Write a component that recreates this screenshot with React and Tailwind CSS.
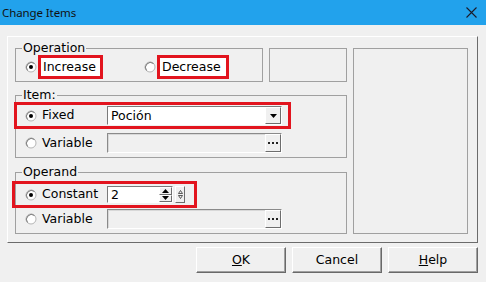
import React from 'react';

const Radio = ({ checked }) => (
  <svg width="12" height="12" viewBox="0 0 12 12" className="shrink-0">
    <circle cx="6" cy="6" r="5" fill="#fff" stroke="#b5b5b5" />
    <path d="M2.5 9.5 A5 5 0 0 1 9.5 2.5" fill="none" stroke="#7a7a7a" />
    {checked && <circle cx="6" cy="6" r="2" fill="#000" />}
  </svg>
);

const Dots = () => (
  <div className="flex h-full w-[16px] shrink-0 items-center justify-center gap-[2px] border border-t-white border-l-white border-r-[#6d6d6d] border-b-[#6d6d6d] bg-[#f0f0f0]">
    <span className="h-[2px] w-[2px] bg-[#222]" />
    <span className="h-[2px] w-[2px] bg-[#222]" />
    <span className="h-[2px] w-[2px] bg-[#222]" />
  </div>
);

const BrowseField = () => (
  <div className="flex h-[20px] w-[175px] justify-end border border-t-[#8a8a8a] border-l-[#8a8a8a] border-r-white border-b-white bg-[#f0f0f0] shadow-[inset_1px_1px_0_#d8d8d8]">
    <Dots />
  </div>
);

const Spin = () => (
  <div className="flex w-[13px] flex-col">
    <div className="flex h-1/2 items-center justify-center border border-t-white border-l-white border-r-[#6d6d6d] border-b-[#6d6d6d] bg-[#f0f0f0]">
      <svg width="7" height="4" viewBox="0 0 7 4"><path d="M3.5 0 L7 4 L0 4 Z" fill="#000" /></svg>
    </div>
    <div className="flex h-1/2 items-center justify-center border border-t-white border-l-white border-r-[#6d6d6d] border-b-[#6d6d6d] bg-[#f0f0f0]">
      <svg width="7" height="4" viewBox="0 0 7 4"><path d="M0 0 L7 0 L3.5 4 Z" fill="#000" /></svg>
    </div>
  </div>
);

const Button = ({ children }) => (
  <button className="flex h-[26px] w-[90px] items-center justify-center border border-t-white border-l-white border-r-[#696969] border-b-[#696969] bg-[#f0f0f0] text-[12.5px] shadow-[inset_-1px_-1px_0_#a0a0a0]">
    {children}
  </button>
);

export default function App() {
  return (
    <div className="h-[282px] w-[486px] bg-[#f0f0f0] font-['DejaVu_Sans',sans-serif] text-[12.5px] text-black">
      <div className="flex h-[25px] items-center justify-between bg-[#22a2ec] pl-[2px] pr-[9px]">
        <span className="font-['Noto_Sans',sans-serif] text-[11.5px] tracking-[-0.1px] text-[#111]">Change Items</span>
        <svg width="11" height="11" viewBox="0 0 11 11">
          <path d="M0.5 0.5 L10.5 10.5 M10.5 0.5 L0.5 10.5" stroke="#1b1b2a" strokeWidth="1.1" />
        </svg>
      </div>

      <div className="pl-[7px] pt-[11px]">
        <div className="flex h-[207px] w-[471px] gap-[6px] border border-t-white border-l-white border-r-[#6b6b6b] border-b-[#6b6b6b] pb-[8px] pl-[7px] pr-[9px] pt-[4px]">
          <div className="flex w-[332px] flex-col">
            <div className="flex gap-[6px]">
              <fieldset className="w-[248px] border border-[#a0a0a0] pb-[2px]">
                <legend className="ml-[6px] px-[1px] leading-[14px]">Operation</legend>
                <div className="flex h-[24px] items-center pl-[9px]">
                  <Radio checked />
                  <div className="ml-[1px] flex h-[24px] w-[65px] items-center border-[3px] border-[#e2141e] bg-white pl-[2px]">
                    Increase
                  </div>
                  <div className="ml-[41px]">
                    <Radio />
                  </div>
                  <div className="ml-[1px] flex h-[24px] w-[72px] items-center border-[3px] border-[#e2141e] bg-white pl-[2px]">
                    Decrease
                  </div>
                </div>
              </fieldset>
              <div className="mt-[7px] h-[34px] w-[78px] border border-[#a0a0a0]" />
            </div>

            <fieldset className="mt-[6px] w-full border border-[#a0a0a0] pb-[4px]">
              <legend className="ml-[6px] px-[1px] leading-[14px]">Item:</legend>
              <div className="-ml-[2px] flex h-[27px] w-[277px] items-center border-[3px] border-[#e2141e] pl-[8px]">
                <Radio checked />
                <span className="w-[70px] pl-[5px]">Fixed</span>
                <div className="flex h-[19px] w-[175px] border border-t-[#7a7a7a] border-l-[#7a7a7a] border-r-white border-b-white bg-white">
                  <span className="flex-1 pl-[3px] leading-[17px]">Poción</span>
                  <div className="flex w-[16px] items-center justify-center border border-t-white border-l-white border-r-[#6d6d6d] border-b-[#6d6d6d] bg-[#f0f0f0]">
                    <svg width="7" height="4" viewBox="0 0 7 4"><path d="M0 0 L7 0 L3.5 4 Z" fill="#000" /></svg>
                  </div>
                </div>
              </div>
              <div className="mt-[4px] flex h-[20px] items-center pl-[9px]">
                <Radio />
                <span className="w-[70px] pl-[5px]">Variable</span>
                <BrowseField />
              </div>
            </fieldset>

            <fieldset className="mt-[7px] w-full border border-[#a0a0a0] pb-[4px]">
              <legend className="ml-[6px] px-[1px] leading-[14px]">Operand</legend>
              <div className="-ml-[4px] mt-[2px] flex h-[27px] w-[185px] items-center border-[3px] border-[#e2141e] pl-[10px]">
                <Radio checked />
                <span className="w-[70px] pl-[5px]">Constant</span>
                <div className="flex h-[17px] w-[66px] border border-t-[#7a7a7a] border-l-[#7a7a7a] border-r-white border-b-white bg-white">
                  <span className="flex-1 pl-[3px] leading-[15px]">2</span>
                  <Spin />
                </div>
                <div className="ml-[2px] flex h-[17px] w-[10px] items-center justify-center border border-t-white border-l-white border-r-[#6d6d6d] border-b-[#6d6d6d] bg-[#f0f0f0]">
                  <svg width="5" height="9" viewBox="0 0 5 9">
                    <path d="M2.5 0.5 L4.5 3.5 L0.5 3.5 Z M2.5 8.5 L4.5 5.5 L0.5 5.5 Z" fill="none" stroke="#333" strokeWidth="0.8" />
                  </svg>
                </div>
              </div>
              <div className="mt-[1px] flex h-[20px] items-center pl-[9px]">
                <Radio />
                <span className="w-[70px] pl-[5px]">Variable</span>
                <BrowseField />
              </div>
            </fieldset>
          </div>

          <div className="mt-[7px] h-[186px] w-[115px] border border-[#a0a0a0]" />
        </div>

        <div className="mt-[4px] flex w-[471px] justify-end gap-[6px]">
          <Button><span className="underline">O</span>K</Button>
          <Button>Cancel</Button>
          <Button><span className="underline">H</span>elp</Button>
        </div>
      </div>
    </div>
  );
}
